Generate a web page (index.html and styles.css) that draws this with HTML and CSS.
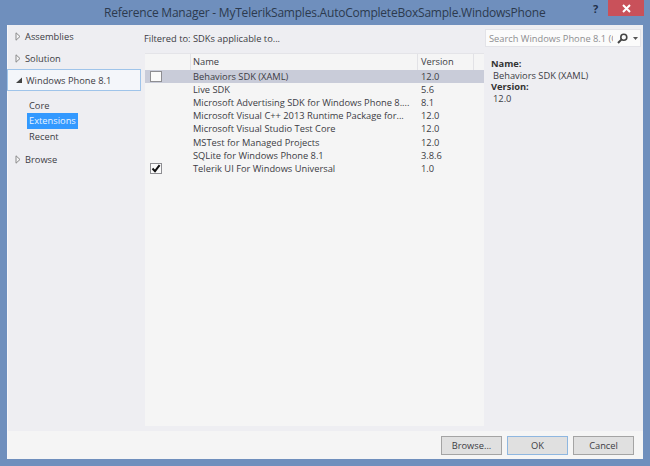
FILE: index.html
```html
<!DOCTYPE html>
<html lang="en">
<head>
<meta charset="utf-8">
<title>Reference Manager</title>
<link rel="stylesheet" href="styles.css">
</head>
<body>
<div class="window">
  <header class="titlebar">
    <div class="title">Reference Manager - MyTelerikSamples.AutoCompleteBoxSample.WindowsPhone</div>
    <div class="help">?</div>
    <div class="close">
      <svg width="9" height="9" viewBox="0 0 9 9"><path d="M1 1L8 8M8 1L1 8" stroke="#fff" stroke-width="2"/></svg>
    </div>
  </header>
  <div class="client">
    <div class="main">
      <nav class="sidebar">
        <div class="nav-item"><svg class="arrow" viewBox="0 0 6 9"><path d="M1 .8L5 4.5L1 8.2Z" fill="#f4f4f6" stroke="#8a8a8a"/></svg>Assemblies</div>
        <div class="nav-item"><svg class="arrow" viewBox="0 0 6 9"><path d="M1 .8L5 4.5L1 8.2Z" fill="#f4f4f6" stroke="#8a8a8a"/></svg>Solution</div>
        <div class="nav-item nav-active"><svg class="arrow" viewBox="0 0 6 9"><path d="M0 7L6 1.5V7Z" fill="#444"/></svg>Windows Phone 8.1</div>
        <div class="subnav">
          <div class="sub-item"><span class="sub-label">Core</span></div>
          <div class="sub-item"><span class="sub-label sub-selected">Extensions</span></div>
          <div class="sub-item"><span class="sub-label">Recent</span></div>
        </div>
        <div class="nav-item"><svg class="arrow" viewBox="0 0 6 9"><path d="M1 .8L5 4.5L1 8.2Z" fill="#f4f4f6" stroke="#8a8a8a"/></svg>Browse</div>
      </nav>
      <section class="center">
        <div class="filter">Filtered to: SDKs applicable to...</div>
        <div class="list">
          <div class="list-head">
            <div class="cell-check"></div>
            <div class="cell-name">Name</div>
            <div class="cell-version">Version</div>
            <div class="cell-rest"></div>
          </div>
          <div class="row row-selected"><div class="cell-check"><span class="checkbox"></span></div><div class="cell-name">Behaviors SDK (XAML)</div><div class="cell-version">12.0</div></div>
          <div class="row"><div class="cell-check"></div><div class="cell-name">Live SDK</div><div class="cell-version">5.6</div></div>
          <div class="row"><div class="cell-check"></div><div class="cell-name">Microsoft Advertising SDK for Windows Phone 8....</div><div class="cell-version">8.1</div></div>
          <div class="row"><div class="cell-check"></div><div class="cell-name">Microsoft Visual C++ 2013 Runtime Package for...</div><div class="cell-version">12.0</div></div>
          <div class="row"><div class="cell-check"></div><div class="cell-name">Microsoft Visual Studio Test Core</div><div class="cell-version">12.0</div></div>
          <div class="row"><div class="cell-check"></div><div class="cell-name">MSTest for Managed Projects</div><div class="cell-version">12.0</div></div>
          <div class="row"><div class="cell-check"></div><div class="cell-name">SQLite for Windows Phone 8.1</div><div class="cell-version">3.8.6</div></div>
          <div class="row"><div class="cell-check"><span class="checkbox checkbox-on"><svg width="10" height="9" viewBox="0 0 10 9"><path d="M1.5 4.5L4 7.2L8.6 1.2" fill="none" stroke="#111" stroke-width="2"/></svg></span></div><div class="cell-name">Telerik UI For Windows Universal</div><div class="cell-version">1.0</div></div>
        </div>
      </section>
      <aside class="details">
        <div class="search">
          <span class="search-text">Search Windows Phone 8.1 (C</span>
          <svg class="search-icon" width="11" height="11" viewBox="0 0 11 11"><circle cx="6.8" cy="4.2" r="3" fill="none" stroke="#444" stroke-width="1.6"/><path d="M4.6 6.4L1 10" stroke="#444" stroke-width="2"/></svg>
          <svg class="search-drop" width="5" height="3" viewBox="0 0 5 3"><path d="M0 0H5L2.5 3Z" fill="#555"/></svg>
        </div>
        <div class="info">
          <div class="info-label">Name:</div>
          <div class="info-value">Behaviors SDK (XAML)</div>
          <div class="info-label">Version:</div>
          <div class="info-value">12.0</div>
        </div>
      </aside>
    </div>
    <footer class="footer">
      <button class="btn">Browse...</button>
      <button class="btn btn-default">OK</button>
      <button class="btn">Cancel</button>
    </footer>
  </div>
</div>
</body>
</html>
```
FILE: styles.css
```css
* { box-sizing: border-box; }
html, body { margin: 0; padding: 0; }
body {
  width: 650px;
  height: 466px;
  overflow: hidden;
  font-family: "Open Sans", "Noto Sans", sans-serif;
  font-size: 9.3px;
  color: #3c3c44;
}
.window {
  width: 650px;
  height: 466px;
  background: #6f8fbd;
  padding: 0 7px 7px 7px;
  display: flex;
  flex-direction: column;
}
.titlebar {
  height: 25px;
  flex: none;
  display: flex;
  align-items: flex-start;
  position: relative;
}
.title {
  position: absolute;
  left: 97px;
  top: 4px;
  font-size: 12px;
  letter-spacing: -0.22px;
  line-height: 18px;
  color: #2c3a4e;
  white-space: nowrap;
}
.help {
  position: absolute;
  left: 586px;
  top: 2px;
  font-size: 11px;
  line-height: 14px;
  font-weight: 700;
  color: #1f2f4a;
}
.close {
  position: absolute;
  left: 601px;
  top: 0;
  width: 36px;
  height: 16px;
  background: #c9515a;
  display: flex;
  align-items: center;
  justify-content: center;
}
.client {
  flex: 1;
  background: #f5f5f5;
  display: flex;
  flex-direction: column;
  border-left: 1px solid #f7f7fb;
}
.main {
  flex: 1;
  display: flex;
  background: #eeeef2;
  min-height: 0;
}
.sidebar {
  width: 136px;
  flex: none;
}
.nav-item {
  height: 22px;
  display: flex;
  align-items: center;
  padding-left: 7px;
  white-space: nowrap;
}
.arrow {
  width: 6px;
  height: 9px;
  margin-right: 4px;
  flex: none;
}
.nav-active {
  margin-left: -1px;
  padding-left: 8px;
  border: 1px solid #9fc4ea;
  background: #f4f6fa;
  width: 134px;
}
.subnav {
  padding: 7px 0 4px 19px;
}
.sub-item {
  height: 15.5px;
  display: flex;
  align-items: center;
}
.sub-label {
  padding: 0 2px;
  line-height: 16px;
}
.sub-selected {
  background: #3399ff;
  color: #eaf4ff;
}
.center {
  width: 340px;
  flex: none;
  display: flex;
  flex-direction: column;
  padding-bottom: 5px;
}
.filter {
  height: 28px;
  padding-top: 7px;
  line-height: 14px;
}
.list {
  flex: 1;
  background: #f5f5f5;
  margin-left: 1px;
}
.list-head {
  height: 17px;
  display: flex;
  align-items: stretch;
  border-top: 1px solid #e4e4e8;
  line-height: 15px;
}
.list-head > div {
  border-right: 1px solid #e2e2e6;
}
.list-head .cell-version { width: 56px; }
.list-head .cell-rest { border-right: 0; flex: 1; }
.cell-check {
  width: 46px;
  flex: none;
  display: flex;
  align-items: center;
  padding-left: 5px;
}
.cell-name {
  width: 227px;
  flex: none;
  padding-left: 2px;
  white-space: nowrap;
}
.cell-version {
  flex: none;
  padding-left: 3px;
}
.row {
  height: 13.1px;
  display: flex;
  align-items: center;
  line-height: 13px;
}
.row-selected {
  background: #c9ccd9;
}
.checkbox {
  width: 12px;
  height: 11px;
  background: #fafafa;
  border: 1px solid #8e8e92;
  display: flex;
  align-items: center;
  justify-content: center;
}
.details {
  flex: 1;
  min-width: 0;
  padding: 4px 2px 0 1px;
}
.search {
  height: 18px;
  background: #fbfbfb;
  border: 1px solid #e3e3e8;
  display: flex;
  align-items: center;
  padding-left: 3px;
  overflow: hidden;
}
.search-text {
  width: 124px;
  flex: none;
  overflow: hidden;
  white-space: nowrap;
  color: #8d8d90;
}
.search-icon { margin-left: 4px; flex: none; }
.search-drop { margin-left: 5px; flex: none; }
.info {
  padding: 11px 0 0 6px;
  line-height: 11.5px;
}
.info-label { font-weight: 700; color: #333; }
.info-value { padding-left: 2px; }
.footer {
  height: 28px;
  flex: none;
  display: flex;
  justify-content: flex-end;
  align-items: center;
  gap: 5px;
  padding-right: 9px;
  background: #f5f5f5;
}
.btn {
  width: 61px;
  height: 19px;
  padding: 0;
  font: inherit;
  color: #3c3c44;
  background: #e0e0e0;
  border: 1px solid #a4a4a4;
}
.btn-default {
  border-color: #8fb7e0;
}
```
